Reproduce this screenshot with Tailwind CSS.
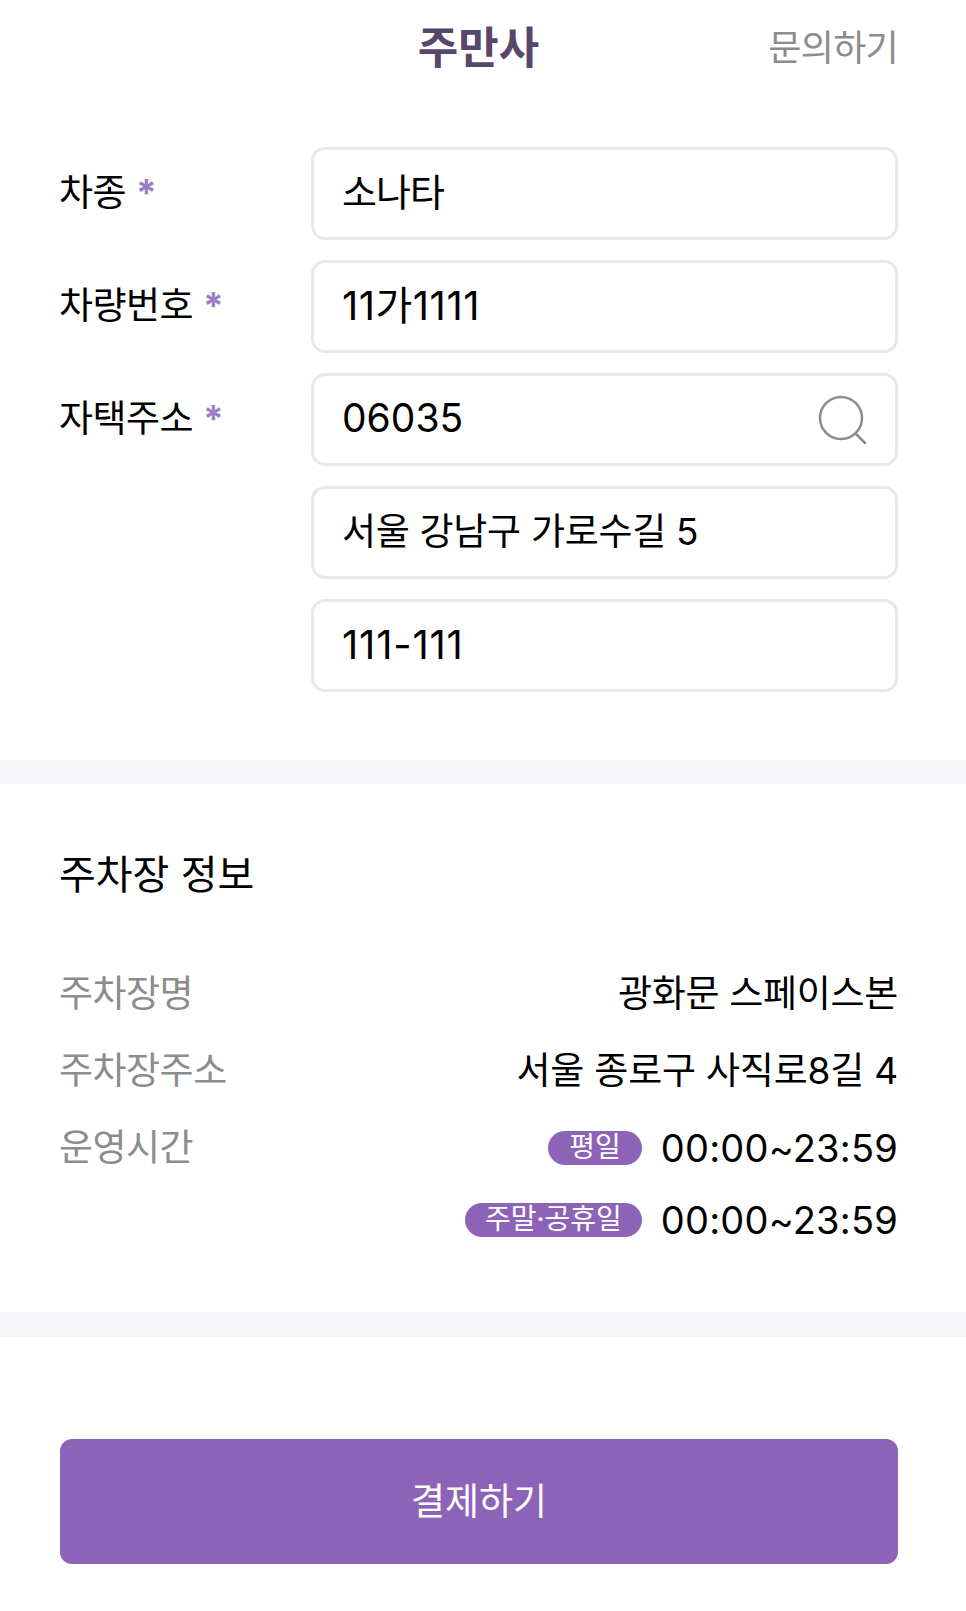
<!DOCTYPE html>
<html lang="ko">
<head>
    <meta charset="UTF-8">
    <title>주만사</title>
    <script src="https://cdn.jsdelivr.net/npm/@tailwindcss/browser@4"></script>
</head>
<body class="bg-white text-black font-['Inter','Noto_Sans_CJK_KR',sans-serif]">
<div class="w-[966px] h-[1611px] overflow-hidden">
    <!-- Header -->
    <header class="relative h-[147px] pt-[22px] pl-[60px] pr-[68px] flex justify-end items-start">
        <h1 class="absolute left-0 w-[957px] text-center text-[44px] leading-[52px] font-bold text-[#59476b]">주만사</h1>
        <a class="text-[36px] leading-[52px] text-[#8c8c8c] tracking-[-0.7px]">문의하기</a>
    </header>

    <!-- Form -->
    <form class="pl-[60px] pr-[68px] flex flex-col gap-[20px]">
        <div class="flex">
            <label class="w-[252px] -ml-[1px] pt-[23px] text-[37px] leading-[46px] tracking-[-0.5px]">차종 <span class="text-[#9b7cc9] font-bold">*</span></label>
            <div class="flex-1 h-[93px] border-[3px] border-[#e8e8e8] rounded-[14px] pl-[28px] pb-[3px] flex items-center text-[38px] tracking-[-1px]">소나타</div>
        </div>
        <div class="flex">
            <label class="w-[252px] -ml-[1px] pt-[23px] text-[37px] leading-[46px] tracking-[-0.5px]">차량번호 <span class="text-[#9b7cc9] font-bold">*</span></label>
            <div class="flex-1 h-[93px] border-[3px] border-[#e8e8e8] rounded-[14px] pl-[28px] pb-[2px] flex items-center text-[40px] tracking-[0.5px]">11가1111</div>
        </div>
        <div class="flex">
            <label class="w-[252px] -ml-[1px] pt-[23px] text-[37px] leading-[46px] tracking-[-0.5px]">자택주소 <span class="text-[#9b7cc9] font-bold">*</span></label>
            <div class="flex-1 h-[93px] border-[3px] border-[#e8e8e8] rounded-[14px] pl-[28px] pr-[27px] pb-[2px] flex items-center justify-between text-[39px]">
                <span>06035</span>
                <svg class="w-[50px] h-[50px] mt-[2px] text-[#8c8c8c]" viewBox="0 0 50 50" fill="none" stroke="currentColor" stroke-width="2.5" stroke-linecap="round">
                    <circle cx="23" cy="23" r="21"></circle>
                    <path d="M38 39l9 9"></path>
                </svg>
            </div>
        </div>
        <div class="pl-[251px]">
            <div class="h-[93px] border-[3px] border-[#e8e8e8] rounded-[14px] pl-[28px] pb-[2px] flex items-center text-[37px] tracking-[-0.3px]">서울 강남구 가로수길 5</div>
        </div>
        <div class="pl-[251px]">
            <div class="h-[93px] border-[3px] border-[#e8e8e8] rounded-[14px] pl-[28px] pb-[2px] flex items-center text-[40px] tracking-[0.8px]">111-111</div>
        </div>
    </form>

    <div class="mt-[68px] h-[24px] bg-[#f7f7f9]"></div>

    <!-- Parking info -->
    <section class="pl-[60px] pr-[68px] h-[528px] pt-[63px]">
        <h2 class="-ml-[1px] text-[40px] leading-[56px]">주차장 정보</h2>
        <div class="mt-[64px] flex flex-col gap-[23px] text-[37px] leading-[54px]">
            <div class="flex justify-between">
                <span class="-ml-[1px] text-[#8c8c8c] tracking-[-0.5px]">주차장명</span>
                <span class="tracking-[-0.3px]">광화문 스페이스본</span>
            </div>
            <div class="flex justify-between">
                <span class="-ml-[1px] text-[#8c8c8c] tracking-[-0.5px]">주차장주소</span>
                <span class="tracking-[-0.2px]">서울 종로구 사직로8길 4</span>
            </div>
            <div class="flex justify-between items-center">
                <span class="-ml-[1px] text-[#8c8c8c] tracking-[-0.5px]">운영시간</span>
                <div class="flex items-center gap-[19px]">
                    <span class="h-[34px] px-[21px] rounded-full bg-[#8d63b8] text-white text-[28px] leading-[32px]">평일</span>
                    <span class="text-[38px] tracking-[0.2px]">00:00~23:59</span>
                </div>
            </div>
            <div class="flex justify-end items-center gap-[19px] -mt-[5px]">
                <span class="h-[34px] px-[20px] rounded-full bg-[#8d63b8] text-white text-[28px] leading-[32px]">주말·공휴일</span>
                <span class="text-[38px] tracking-[0.2px]">00:00~23:59</span>
            </div>
        </div>
    </section>

    <div class="h-[25px] bg-[#f7f7f9]"></div>

    <!-- Pay button -->
    <div class="pl-[60px] pr-[68px] pt-[102px]">
        <button type="button" class="w-full h-[125px] rounded-[12px] bg-[#8d63b8] text-white text-[37px]">결제하기</button>
    </div>
</div>
</body>
</html>
